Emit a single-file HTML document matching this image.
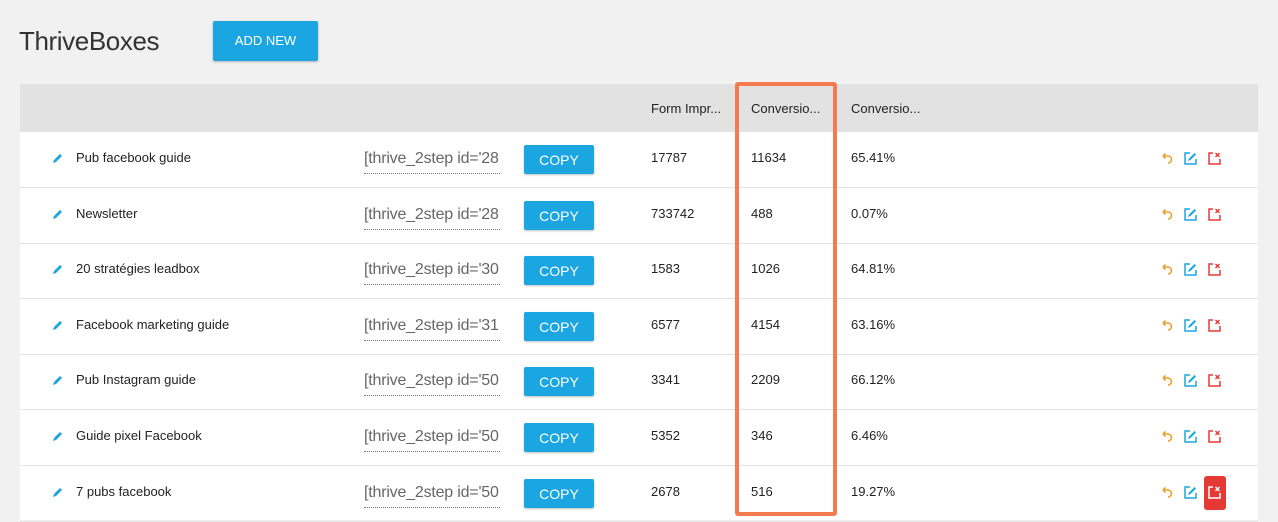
<!DOCTYPE html>
<html><head><style>
body{margin:0;width:1278px;height:520px;background:#f1f1f1;font-family:"Liberation Sans",sans-serif;position:relative;overflow:hidden;color:#222}
.a{position:absolute}
h1{position:absolute;left:19px;top:26px;margin:0;font-weight:normal;font-size:26px;color:#333;letter-spacing:-0.4px}
.btn{background:#1ba6e2;color:#fff;text-align:center;border-radius:2px;box-shadow:0 1px 2px rgba(0,0,0,.25)}
.tbl{left:20px;top:84px;width:1238px;height:436px;background:#fff}
.hdr{left:20px;top:84px;width:1238px;height:48px;background:#e2e2e2}
.row{left:20px;width:1238px;height:55px;border-bottom:1px solid #e3e3e3}
.t{font-size:13px;color:#222}
.sc{font-size:16px;color:#666;border-bottom:1px dotted #777;width:136px;height:28px;overflow:hidden;white-space:nowrap;line-height:28px;letter-spacing:-0.2px}
</style></head><body>
<h1>ThriveBoxes</h1>
<div class="a btn" style="left:213px;top:21px;width:105px;height:40px;line-height:40px;font-size:13px">ADD NEW</div>
<div class="a tbl"></div>
<div class="a hdr"></div>
<div class="a t" style="left:651px;top:101px">Form Impr...</div>
<div class="a t" style="left:751px;top:101px">Conversio...</div>
<div class="a t" style="left:851px;top:101px">Conversio...</div>
<div id="rows"></div>
<div class="a" style="left:735px;top:82px;width:94px;height:426px;border:4px solid #f47a4f;border-radius:3px"></div>
<script>
var d=[["Pub facebook guide","28","17787","11634","65.41%"],["Newsletter","28","733742","488","0.07%"],["20 stratégies leadbox","30","1583","1026","64.81%"],["Facebook marketing guide","31","6577","4154","63.16%"],["Pub Instagram guide","50","3341","2209","66.12%"],["Guide pixel Facebook","50","5352","346","6.46%"],["7 pubs facebook","50","2678","516","19.27%"]];
var h="";
d.forEach(function(r,i){var y=132+i*55.6;var c=y+27;
h+='<div class="a row" style="top:'+y+'px"></div>';
h+='<svg class="a" style="left:51px;top:'+(c-7)+'px" width="13" height="13" viewBox="0 0 13 13"><path d="M2 11 L3 8 L9 2 L11 4 L5 10 Z" fill="#1ba6e2"/></svg>';
h+='<div class="a t" style="left:76px;top:'+(c-9)+'px">'+r[0]+'</div>';
h+='<div class="a sc" style="left:364px;top:'+(c-14)+'px">[thrive_2step id=\''+r[1]+'</div>';
h+='<div class="a btn" style="left:524px;top:'+(c-14)+'px;width:70px;height:29px;line-height:30px;font-size:14px">COPY</div>';
h+='<div class="a t" style="left:651px;top:'+(c-9)+'px">'+r[2]+'</div>';
h+='<div class="a t" style="left:751px;top:'+(c-9)+'px">'+r[3]+'</div>';
h+='<div class="a t" style="left:851px;top:'+(c-9)+'px">'+r[4]+'</div>';
h+='<svg class="a" style="left:1160px;top:'+(c-8)+'px" width="15" height="15" viewBox="0 0 15 15"><path d="M3 5 H8 A3.5 3.5 0 0 1 8 12 M3 5 L5.5 2.5 M3 5 L5.5 7.5" stroke="#f0a030" stroke-width="1.6" fill="none"/></svg>';
h+='<svg class="a" style="left:1183px;top:'+(c-8)+'px" width="15" height="15" viewBox="0 0 15 15"><path d="M7 2 H2 V13 H13 V8" stroke="#1ba6e2" stroke-width="1.5" fill="none"/><path d="M5 10 L6 7.5 L11.5 2 L13 3.5 L7.5 9 Z" fill="#1ba6e2"/></svg>';
if(i==6)h+='<div class="a" style="left:1204px;top:'+(c-17)+'px;width:22px;height:34px;background:#e53935;border-radius:3px"></div>';
var col=i==6?"#fff":"#e53935";
h+='<svg class="a" style="left:1207px;top:'+(c-8)+'px" width="15" height="15" viewBox="0 0 15 15"><path d="M6 2 H2 V13 H13 V8" stroke="'+col+'" stroke-width="1.5" fill="none"/><path d="M8.5 2 L12.5 6 M12.5 2 L8.5 6" stroke="'+col+'" stroke-width="1.4"/></svg>';
});
document.getElementById("rows").innerHTML=h;
</script>
</body></html>
